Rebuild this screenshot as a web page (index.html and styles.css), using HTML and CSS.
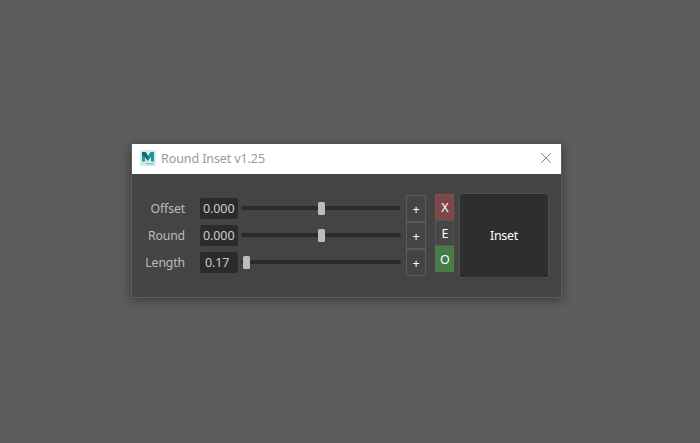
FILE: index.html
```html
<!DOCTYPE html>
<html lang="en">
<head>
<meta charset="utf-8">
<title>Round Inset v1.25</title>
<link rel="stylesheet" href="styles.css">
</head>
<body>
<main class="window">
  <header class="titlebar">
    <svg class="logo" width="16" height="16" viewBox="0 0 16 16">
      <rect width="16" height="16" fill="#d5eaeb"/>
      <path d="M2 2h3.5L8 6L10.500 2H14v9.500h-3V7L8 11L5 7v4.500H2z" fill="#249496"/>
      <path d="M2 2h3.500L8 6V11L5 7L2 5z" fill="#17676c"/>
      <path d="M6 13.700h7.500" stroke="#69bdbd" stroke-width="1.300" stroke-dasharray="1.600 .400"/>
    </svg>
    <h1 class="title">Round Inset v1.25</h1>
    <svg class="close" width="12" height="12" viewBox="0 0 12 12"><path d="M1 1l10 10M11 1L1 11" stroke="#8c8c8c" stroke-width="1"/></svg>
  </header>
  <div class="panel">
    <div class="sliders">
      <div class="row"><span class="label">Offset</span><span class="field">0.000</span><div class="slider"><i class="thumb middle"></i></div></div>
      <div class="row"><span class="label">Round</span><span class="field">0.000</span><div class="slider"><i class="thumb middle"></i></div></div>
      <div class="row"><span class="label">Length</span><span class="field short">0.17</span><div class="slider"><i class="thumb low"></i></div></div>
    </div>
    <div class="adders">
      <button class="add">+</button><button class="add">+</button><button class="add">+</button>
    </div>
    <div class="modes">
      <button class="mode red">X</button><button class="mode">E</button><button class="mode green">O</button>
    </div>
    <button class="inset">Inset</button>
  </div>
</main>
</body>
</html>
```
FILE: styles.css
```css
* { box-sizing: border-box; }
body {
  margin: 0;
  height: 443px;
  padding: 144px 0 0 131px;
  background: #5d5d5d;
  overflow: hidden;
  font: 13px/18px "Noto Sans", sans-serif;
  color: #bbb;
}
.window {
  width: 431px;
  height: 154px;
  border: 1px solid #5c5c5c;
  border-top: 0;
  background: #444;
  box-shadow: 0 2px 10px rgba(0, 0, 0, .4);
}
.titlebar {
  display: flex;
  align-items: center;
  height: 30px;
  padding: 0 9px 0 8px;
  background: #fff;
}
.logo { margin-top: -2px; }
.title {
  flex: 1;
  margin: 0 0 0 5px;
  font-size: 12.5px;
  font-weight: 400;
  line-height: 28px;
  letter-spacing: -.1px;
  color: #999;
}
.close { margin-top: -2px; }
.panel { display: flex; align-items: flex-start; padding-top: 19px; }
.sliders { width: 269px; padding-top: 5px; }
.row { display: flex; height: 21px; margin-bottom: 6px; }
.label { width: 53px; margin-right: 15px; line-height: 22px; font-size: 12.3px; letter-spacing: -.15px; text-align: right; }
.field {
  width: 38px;
  margin-right: 3px;
  padding-left: 3px;
  border-radius: 2px;
  background: #2b2b2b;
  color: #ccc;
  font-size: 12.5px;
  letter-spacing: -.1px;
  line-height: 21px;
}
.short { padding-left: 5px; }
.slider { display: flex; align-items: center; width: 160px; height: 4px; margin-top: 8px; border-radius: 2px; background: #2b2b2b; }
.thumb { flex: none; width: 7px; height: 13px; margin-top: 1px; border-radius: 1.5px; background: #bdbdbd; }
.middle { margin-left: 77px; }
.low { margin-left: 2px; }
button { display: block; margin: 0; padding: 0; border: 0; font: inherit; font-size: 12.5px; color: #fff; }
.adders { width: 20px; margin: 2px 9px 0 5px; }
.add { width: 20px; height: 27px; padding-top: 2px; border: 1px solid #5a5a5a; background: #444; }
.modes { width: 19px; margin: 1px 5px 0 0; }
.mode { width: 19px; height: 26px; padding: 2px 0 0 1px; border: 1px solid #555; background: #474747; }
.red { background: #7c4746; border-color: #844f4e; border-bottom-color: #635252; }
.green { background: #477b47; border-color: #4d804d; }
.inset { width: 90px; height: 85px; border: 1px solid #4e4e4e; border-radius: 2px; background: #2e2e2e; letter-spacing: -.3px; }
```
